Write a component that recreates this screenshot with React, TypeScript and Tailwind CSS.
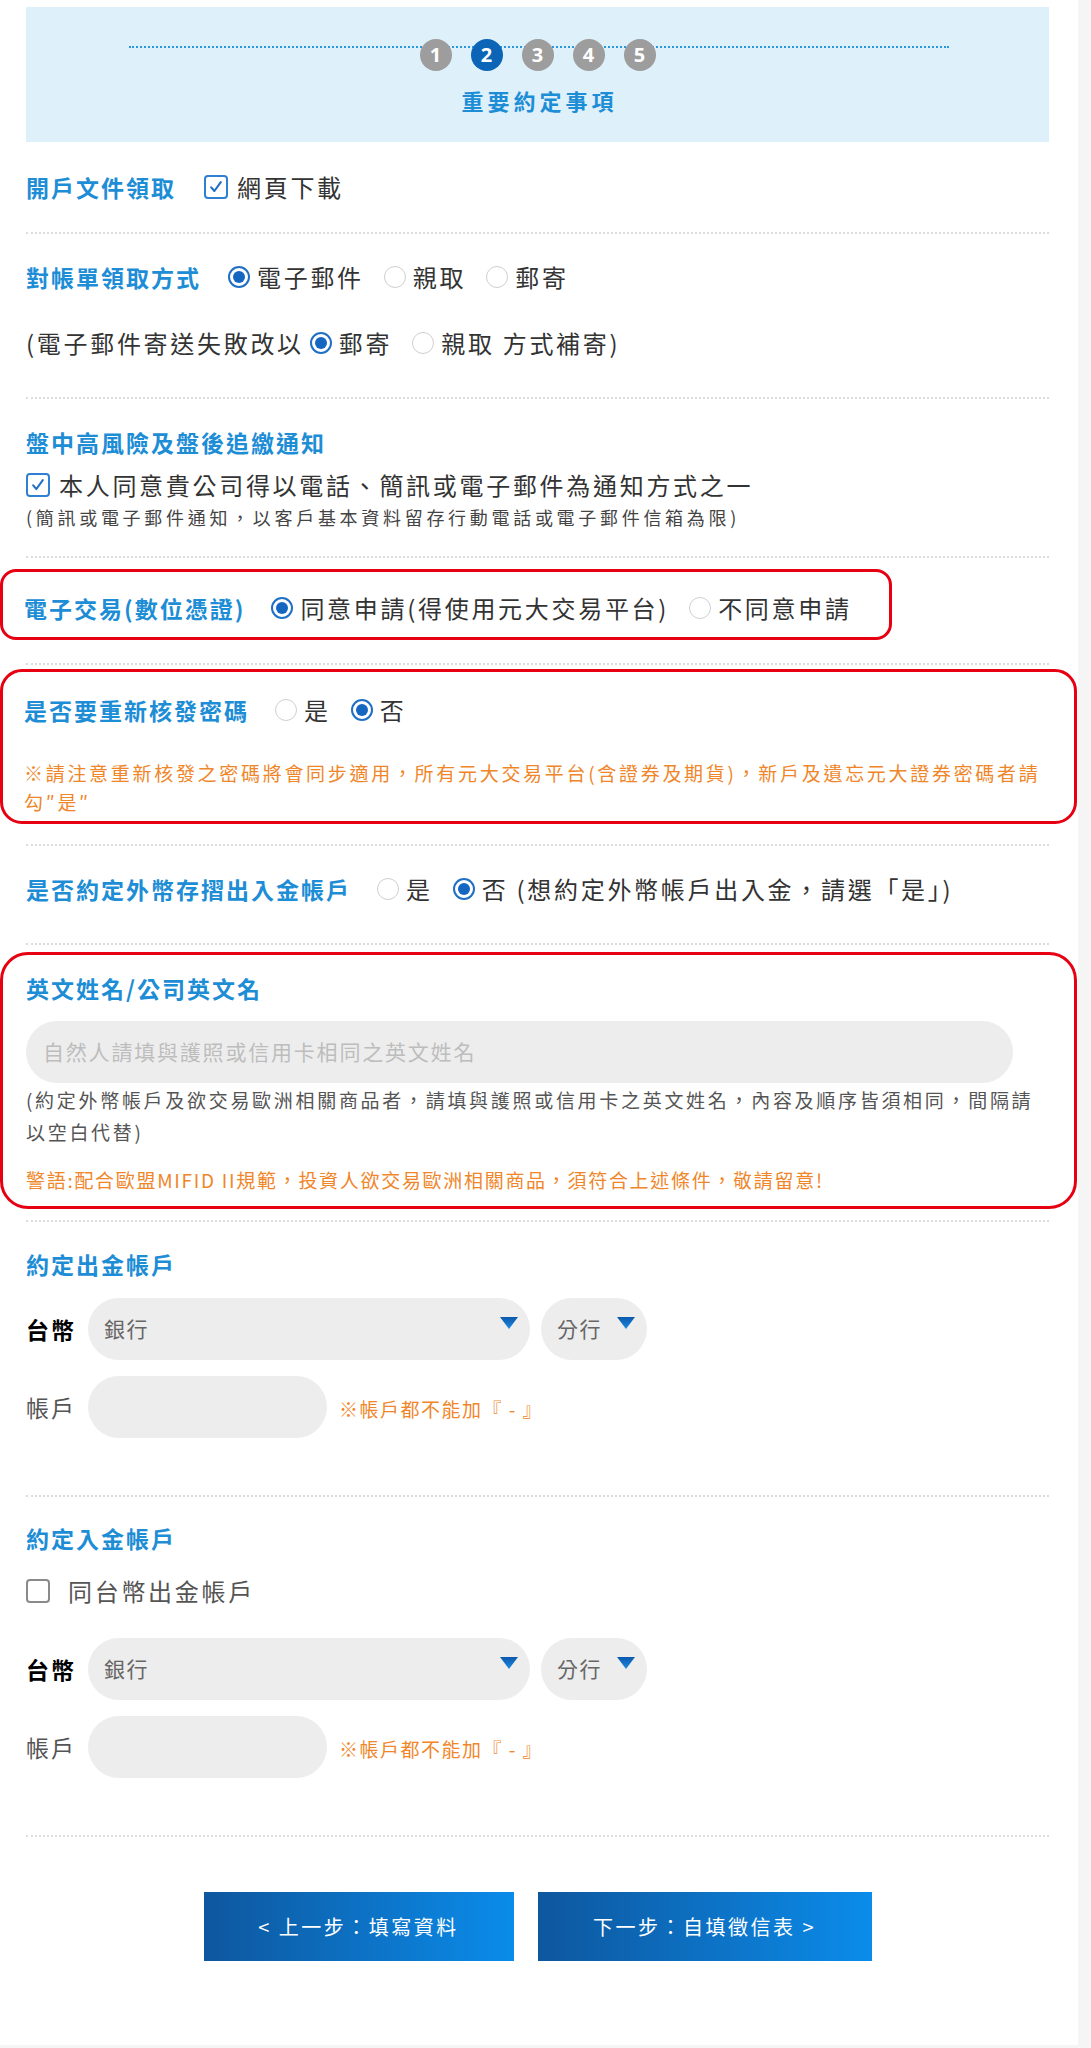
import React from "react";

function Radio({ on }: { on?: boolean }) {
  return on ? (
    <span className="inline-flex h-[22px] w-[22px] shrink-0 items-center justify-center rounded-full border-2 border-[#1f6fc5] bg-white">
      <span className="h-[12px] w-[12px] rounded-full bg-[#1566c0]" />
    </span>
  ) : (
    <span className="inline-block h-[22px] w-[22px] shrink-0 rounded-full border-[1.5px] border-[#cfcfcf] bg-white" />
  );
}

function Check({ on }: { on?: boolean }) {
  return on ? (
    <span className="inline-flex h-[24px] w-[24px] shrink-0 items-center justify-center rounded-[4px] border-2 border-[#2f7fd2] bg-white">
      <svg viewBox="0 0 20 20" className="h-[16px] w-[16px]" fill="none" stroke="#1f6fc5" strokeWidth="2.6" strokeLinecap="round" strokeLinejoin="round">
        <path d="M4 10.5 8 15 16 4" />
      </svg>
    </span>
  ) : (
    <span className="inline-block h-[24px] w-[24px] shrink-0 rounded-[4px] border-2 border-[#8a8a8a] bg-white" />
  );
}

function Label({ children }: { children: React.ReactNode }) {
  return <span className="text-[23px] font-bold tracking-[2px] text-[#1d8dd6]">{children}</span>;
}

function Opt({ on, children, first }: { on?: boolean; children: React.ReactNode; first?: boolean }) {
  return (
    <span className={`flex items-center gap-[7px] ${first ? "" : "ml-[20px]"}`}>
      <Radio on={on} />
      <span>{children}</span>
    </span>
  );
}

function Sep() {
  return <div className="border-t-2 border-dotted border-[#dcdcdc]" />;
}

function Triangle() {
  return (
    <svg viewBox="0 0 18 12" className="h-[12px] w-[18px]">
      <defs>
        <linearGradient id="tri" x1="0" y1="0" x2="0" y2="1">
          <stop offset="0" stopColor="#0a58ad" />
          <stop offset="1" stopColor="#1d8be0" />
        </linearGradient>
      </defs>
      <polygon points="0,0 18,0 9,12" fill="url(#tri)" />
    </svg>
  );
}

function BankBlock() {
  return (
    <div className="flex flex-col">
      <div className="mt-[18px] flex h-[62px] items-center">
        <span className="w-[62px] text-[23px] font-bold tracking-[2px] text-black">台幣</span>
        <div className="flex h-[62px] w-[442px] items-start justify-between rounded-full bg-[#ededed] pl-[16px] pr-[12px]">
          <span className="self-center text-[21px] tracking-[1.5px] text-[#666]">銀行</span>
          <span className="mt-[19px]"><Triangle /></span>
        </div>
        <div className="ml-[11px] flex h-[62px] w-[106px] items-start justify-between rounded-full bg-[#ededed] pl-[16px] pr-[12px]">
          <span className="self-center text-[21px] tracking-[1.5px] text-[#666]">分行</span>
          <span className="mt-[19px]"><Triangle /></span>
        </div>
      </div>
      <div className="mt-[16px] flex h-[62px] items-center">
        <span className="w-[62px] text-[23px] tracking-[2px] text-[#555]">帳戶</span>
        <div className="h-[62px] w-[239px] rounded-full bg-[#ededed]" />
        <span className="ml-[12px] mt-[4px] text-[19px] tracking-[1.5px] text-[#f0862a]">※帳戶都不能加『 - 』</span>
      </div>
    </div>
  );
}

export default function App() {
  return (
    <div className="min-h-screen bg-[#f5f5f5] font-['Noto_Sans_CJK_TC','Noto_Sans',sans-serif] text-[#333]">
      <div className="w-[1078px] bg-white pb-[84px] pl-[26px] pr-[29px] pt-[7px]">
        {/* steps */}
        <div className="h-[135px] bg-[#def0fa] pt-[32px]">
          <div className="relative flex justify-center">
            <div className="absolute left-[103px] right-[100px] top-[7px] border-t-2 border-dotted border-[#2a98dd]" />
            {[1, 2, 3, 4, 5].map((n) => (
              <div
                key={n}
                className={`relative mx-[9.5px] flex h-[32px] w-[32px] items-center justify-center rounded-full font-['Open_Sans',sans-serif] text-[20px] font-bold text-white ${
                  n === 2 ? "bg-[#0b64b6]" : "bg-[#9d9d9d]"
                }`}
              >
                {n}
              </div>
            ))}
          </div>
          <div className="mt-[13px] pl-[4px] text-center text-[22px] font-bold tracking-[4px] text-[#1d8dd6]">重要約定事項</div>
        </div>

        <div className="flex h-[90px] items-center">
          <Label>開戶文件領取</Label>
          <span className="ml-[28px] flex items-center gap-[9px] text-[24px] tracking-[2.7px]">
            <Check on />
            網頁下載
          </span>
        </div>
        <Sep />

        <div className="pb-[34px] pt-[23px] text-[24px] tracking-[2.7px]">
          <div className="flex h-[40px] items-center">
            <Label>對帳單領取方式</Label>
            <span className="ml-[27px] flex items-center">
              <Opt on first>電子郵件</Opt>
              <Opt>親取</Opt>
              <Opt>郵寄</Opt>
            </span>
          </div>
          <div className="mt-[26px] flex h-[40px] items-center">
            <span>(電子郵件寄送失敗改以</span>
            <span className="ml-[6px] flex items-center">
              <Opt on first>郵寄</Opt>
              <Opt>親取 方式補寄)</Opt>
            </span>
          </div>
        </div>
        <Sep />

        <div className="pb-[27px] pt-[27px]">
          <div className="flex h-[32px] items-center">
            <Label>盤中高風險及盤後追繳通知</Label>
          </div>
          <div className="mt-[12px] flex h-[30px] items-center gap-[9px] text-[24px] tracking-[2.7px]">
            <Check on />
            本人同意貴公司得以電話、簡訊或電子郵件為通知方式之一
          </div>
          <div className="mt-[5px] flex h-[24px] items-center text-[18px] tracking-[3.7px] text-[#444]">
            (簡訊或電子郵件通知，以客戶基本資料留存行動電話或電子郵件信箱為限)
          </div>
        </div>
        <Sep />

        <div className="-ml-[26px] mt-[11px] w-[892px] rounded-[16px] border-[3px] border-[#e60012] pb-[9px] pl-[21px] pt-[16px]">
          <div className="flex h-[40px] items-center text-[24px] tracking-[2.7px]">
            <Label>電子交易(數位憑證)</Label>
            <span className="ml-[26px] flex items-center">
              <Opt on first>同意申請(得使用元大交易平台)</Opt>
              <Opt>不同意申請</Opt>
            </span>
          </div>
        </div>

        <div className="mt-[23px]">
          <Sep />
        </div>

        <div className="-ml-[26px] -mr-[28px] mt-[4px] rounded-[22px] border-[3px] border-[#e60012] pb-[5px] pl-[21px] pt-[18px]">
          <div className="flex h-[40px] items-center text-[24px] tracking-[2.7px]">
            <Label>是否要重新核發密碼</Label>
            <span className="ml-[26px] flex items-center">
              <Opt first>是</Opt>
              <Opt on>否</Opt>
            </span>
          </div>
          <p className="mt-[28px] w-[1030px] text-[19px] leading-[29px] tracking-[2.7px] text-[#f0862a]">
            ※請注意重新核發之密碼將會同步適用，所有元大交易平台(含證券及期貨)，新戶及遺忘元大證券密碼者請勾″是″
          </p>
        </div>

        <div className="mt-[20px]">
          <Sep />
        </div>

        <div className="pb-[34px] pt-[23px]">
          <div className="flex h-[40px] items-center text-[24px] tracking-[2.7px]">
            <Label>是否約定外幣存摺出入金帳戶</Label>
            <span className="ml-[26px] flex items-center">
              <Opt first>是</Opt>
              <Opt on>否 (想約定外幣帳戶出入金，請選「是」)</Opt>
            </span>
          </div>
        </div>
        <Sep />

        <div className="-ml-[26px] -mr-[28px] mt-[7px] rounded-[28px] border-[3px] border-[#e60012] pb-[10px] pl-[23px] pr-[61px] pt-[17px]">
          <div className="flex h-[32px] items-center">
            <Label>英文姓名/公司英文名</Label>
          </div>
          <div className="mt-[17px] flex h-[62px] items-center rounded-full bg-[#ededed] pl-[17px] text-[21px] tracking-[1.8px] text-[#bdbdbd]">
            自然人請填與護照或信用卡相同之英文姓名
          </div>
          <p className="mt-[1px] w-[1016px] text-[19px] leading-[32px] tracking-[2.7px] text-[#555]">
            (約定外幣帳戶及欲交易歐洲相關商品者，請填與護照或信用卡之英文姓名，內容及順序皆須相同，間隔請以空白代替)
          </p>
          <div className="mt-[16px] flex h-[32px] items-center text-[19px] tracking-[1.7px] text-[#f0862a]">
            警語:配合歐盟MIFID II規範，投資人欲交易歐洲相關商品，須符合上述條件，敬請留意!
          </div>
        </div>

        <div className="mt-[11px]">
          <Sep />
        </div>

        <div className="pb-[57px] pt-[26px]">
          <div className="flex h-[32px] items-center">
            <Label>約定出金帳戶</Label>
          </div>
          <BankBlock />
        </div>
        <Sep />

        <div className="pb-[57px] pt-[25px]">
          <div className="flex h-[32px] items-center">
            <Label>約定入金帳戶</Label>
          </div>
          <div className="mt-[22px] flex h-[30px] items-center gap-[18px] text-[24px] tracking-[2.7px] text-[#555]">
            <Check />
            同台幣出金帳戶
          </div>
          <div className="pt-[14px]">
            <BankBlock />
          </div>
        </div>
        <Sep />

        <div className="mt-[55px] flex justify-center gap-[24px]">
          <button className="flex h-[69px] w-[310px] items-center justify-center bg-gradient-to-r from-[#0d579e] to-[#0a8cea] text-[20px] tracking-[2.5px] text-white">
            &lt; 上一步：填寫資料
          </button>
          <button className="flex h-[69px] w-[334px] items-center justify-center bg-gradient-to-r from-[#0d579e] to-[#0a8cea] text-[20px] tracking-[2.5px] text-white">
            下一步：自填徵信表 &gt;
          </button>
        </div>
      </div>
    </div>
  );
}
